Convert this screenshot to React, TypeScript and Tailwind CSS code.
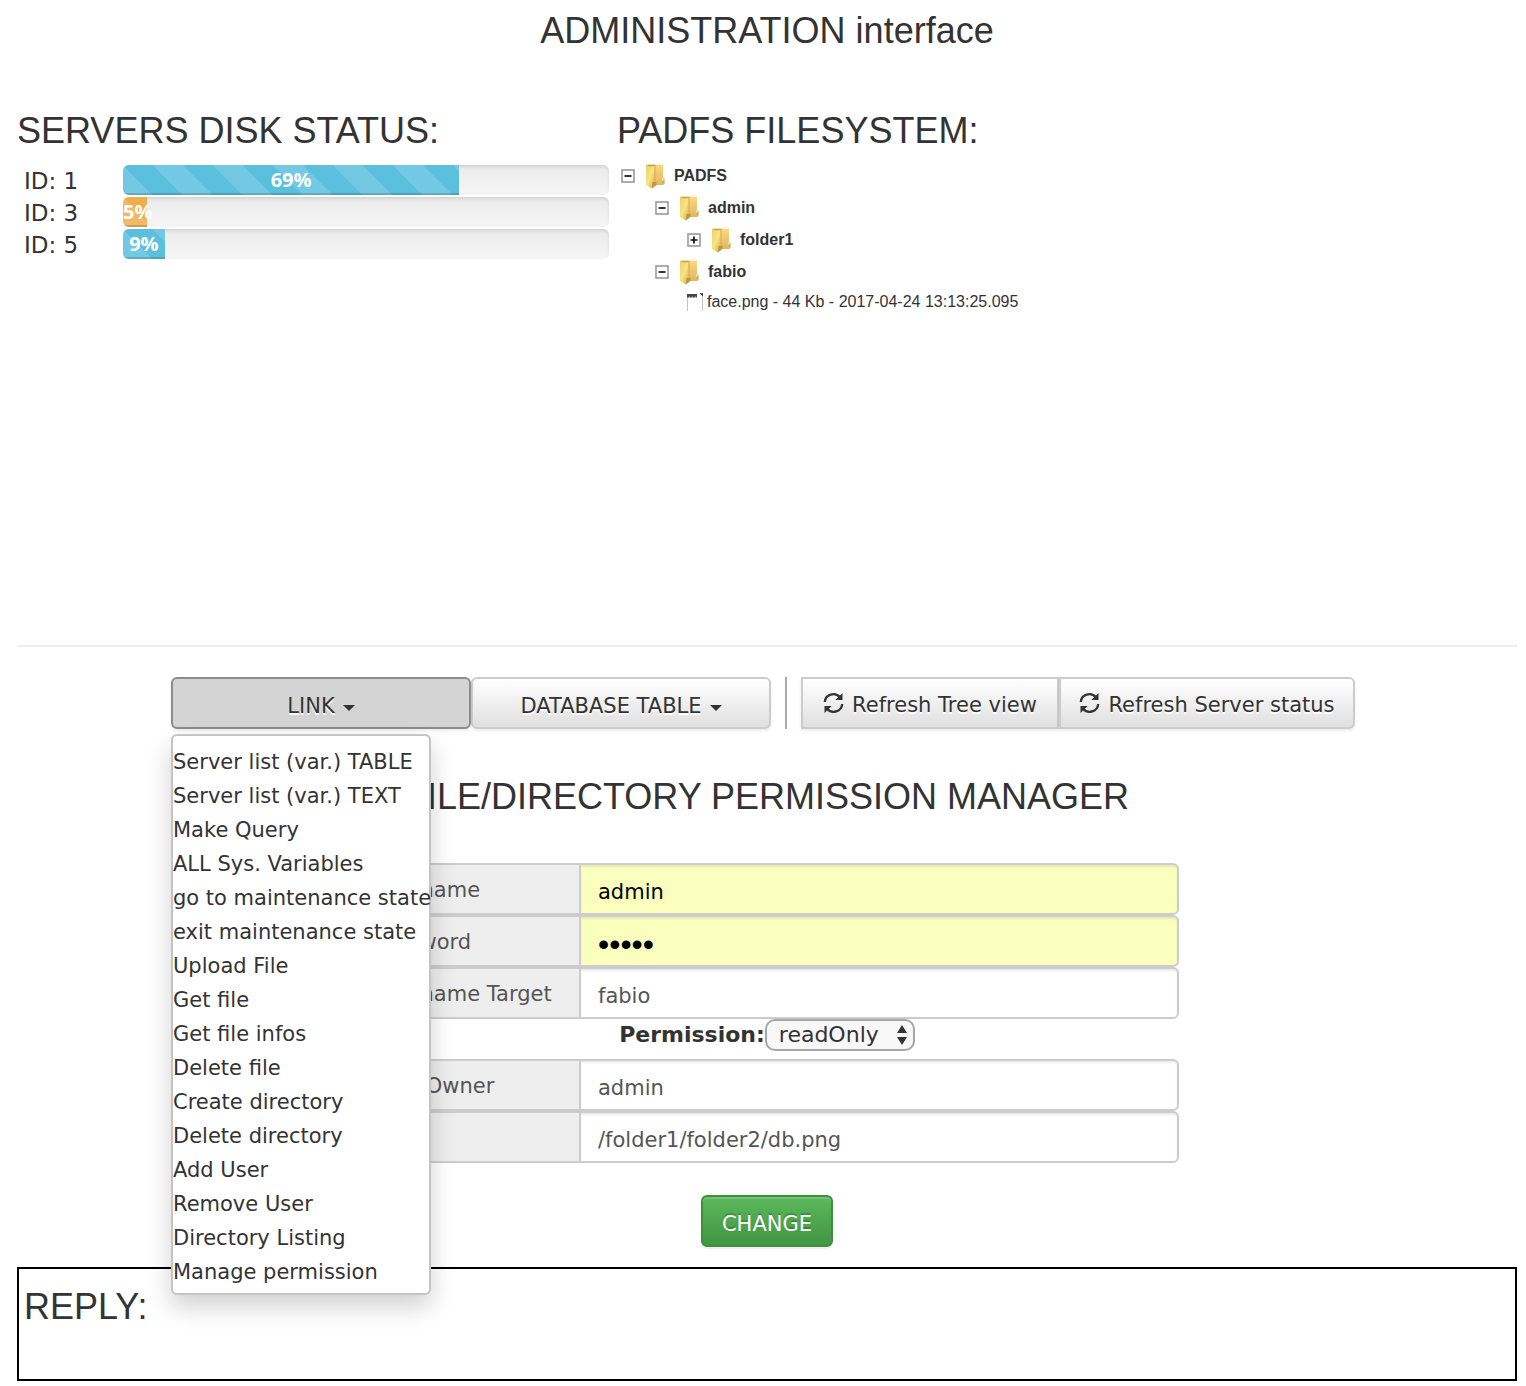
import React from "react";

const servers = [
  { id: 1, used: 69, share: 69.2, color: "bg-[#5bc0de]" },
  { id: 3, used: 5, share: 5, color: "bg-[#f0ad4e]" },
  { id: 5, used: 9, share: 8.6, color: "bg-[#5bc0de]" },
];

const links = [
  "Server list (var.) TABLE",
  "Server list (var.) TEXT",
  "Make Query",
  "ALL Sys. Variables",
  "go to maintenance state",
  "exit maintenance state",
  "Upload File",
  "Get file",
  "Get file infos",
  "Delete file",
  "Create directory",
  "Delete directory",
  "Add User",
  "Remove User",
  "Directory Listing",
  "Manage permission",
];

const heading = "font-['Liberation_Sans',Arial,sans-serif] text-[36px] leading-10 font-normal";
const toolButton =
  "h-[52px] border-2 border-[#ccc] bg-linear-to-b from-white to-[#e0e0e0] shadow-[0_2px_3px_rgba(0,0,0,0.08)] [text-shadow:0_2px_0_#fff] whitespace-nowrap";

function Caret() {
  return (
    <svg className="mt-1 ml-2 inline-block" width="12" height="6" viewBox="0 0 12 6" aria-hidden="true">
      <path d="M0 0h12L6 6z" fill="#333" />
    </svg>
  );
}

function RefreshIcon() {
  return (
    <svg className="mr-2 mb-1 inline-block" width="21" height="22" viewBox="0 0 21 22" fill="none" aria-hidden="true">
      <path d="M1.800 10A8.600 8.300 0 0 1 17 5.200M19.200 12A8.600 8.300 0 0 1 4 16.800" stroke="#333" strokeWidth="2.300" />
      <path d="M19.500 1v7h-7.200zM1.500 21v-7h7.200z" fill="#333" />
    </svg>
  );
}

function Toggle({ open }: { open: boolean }) {
  return (
    <button type="button" aria-label={open ? "Collapse" : "Expand"} className="block h-[14px] w-[14px] shrink-0">
      <svg width="14" height="14" viewBox="0 0 14 14" aria-hidden="true">
        <rect x="1" y="1" width="12" height="12" fill="#fff" stroke="#999" strokeWidth="1.600" />
        <path d={open ? "M3.500 7h7" : "M3.500 7h7M7 3.500v7"} stroke="#111" strokeWidth="1.700" />
      </svg>
    </button>
  );
}

function FolderIcon() {
  return (
    <svg className="shrink-0" width="21" height="25" viewBox="0 0 21 25" aria-hidden="true">
      <defs>
        <linearGradient id="cover" x1="0" y1="0" x2="1" y2="1">
          <stop offset="0" stopColor="#ecd067" />
          <stop offset="0.500" stopColor="#f6e582" />
          <stop offset="1" stopColor="#cfa548" />
        </linearGradient>
        <linearGradient id="back" x1="0" y1="0" x2="0" y2="1">
          <stop offset="0" stopColor="#fbd680" />
          <stop offset="1" stopColor="#e3b75f" />
        </linearGradient>
      </defs>
      <path d="M3 .8h15v12.700l1.800 1.500v4.500l-1.800 1.500H9z" fill="url(#back)" />
      <path d="M1 .8l9 1.700v16.500l-3.200 5.500L1 21z" fill="url(#cover)" />
      <path d="M1 .8h9.500v1.400H4z" fill="#c79c4b" />
      <path d="M10 2.500v17" stroke="#d9ab4c" strokeWidth="1" />
      <path d="M7.500 18h4v3l-4.500 3.500z" fill="#c4963f" />
      <path d="M17.700 14.500v4" stroke="#fff0bd" strokeWidth="1.500" />
      <path d="M18 16.500v2.500" stroke="#93bb86" strokeWidth="1.800" />
    </svg>
  );
}

function FileIcon() {
  return (
    <svg className="shrink-0" width="18" height="18" viewBox="0 0 18 18" aria-hidden="true">
      <path d="M1.500 1v17M16.500 3v15" stroke="#c4c4c4" fill="none" />
      <path d="M1 1h10v3.500H1z" fill="#444" />
      <path d="M3 4h1M6 4h1M9 4h1" stroke="#ddd" />
      <path d="M13.500 0L17 3.500V.5z" fill="#222" />
    </svg>
  );
}

function Folder({ name, open, indent }: { name: string; open: boolean; indent: string }) {
  return (
    <div className={`flex h-8 items-center ${indent}`}>
      <Toggle open={open} />
      <span className="mr-2 ml-[10px] block"><FolderIcon /></span>
      <span className="font-bold">{name}</span>
    </div>
  );
}

function Field({ id, label, value, type = "text", filled = false }: {
  id: string; label: string; value: string; type?: string; filled?: boolean;
}) {
  return (
    <div className="flex h-[52px]">
      <label
        htmlFor={id}
        className="flex w-[224px] shrink-0 items-center rounded-l-md border-2 border-r-0 border-[#ccc] bg-[#eee] pt-0.5 pl-4 text-[#555]"
      >
        {label}
      </label>
      <input
        id={id}
        type={type}
        defaultValue={value}
        autoComplete="off"
        className={`min-w-0 flex-1 rounded-r-md border-2 border-[#ccc] px-[17px] pt-1.5 shadow-[inset_0_2px_2px_rgba(0,0,0,0.075)] outline-none ${
          type === "password" ? "font-['Liberation_Sans',Arial,sans-serif] text-[32px]" : ""
        } ${filled ? "bg-[#faffbd] text-black" : "bg-white text-[#555]"}`}
      />
    </div>
  );
}

export default function App() {
  return (
    <main className="bg-white pr-[9px] pb-[5px] pl-[17px] font-['DejaVu_Sans',Verdana,sans-serif] text-[21px] leading-[30px] text-[#333]">
      <h1 className={`${heading} pt-[11px] text-center`}>ADMINISTRATION interface</h1>

      <div className="mt-[60px] grid min-h-[536px] grid-cols-[2fr_3fr] border-b-2 border-[#eee]">
        <section>
          <h2 className={heading}>SERVERS DISK STATUS:</h2>
          <table className="mt-[13px] w-full border-separate border-spacing-0">
            <tbody>
              {servers.map((s) => (
                <tr key={s.id} className="h-8">
                  <th scope="row" className="w-[106px] p-0 pt-0.5 pl-[7px] text-left text-[23px] font-normal">ID: {s.id}</th>
                  <td className="py-px pr-2 pl-0">
                    <div
                      role="progressbar"
                      aria-valuenow={s.used}
                      aria-label={`Server ${s.id} disk usage`}
                      className="h-[30px] overflow-hidden rounded-md bg-linear-to-b from-[#ebebeb] to-[#f5f5f5] shadow-[inset_0_2px_3px_rgba(0,0,0,0.1)]"
                    >
                      <div
                        className={`flex h-full items-center [justify-content:safe_center] bg-[linear-gradient(45deg,rgba(255,255,255,0.15)_25%,transparent_25%,transparent_50%,rgba(255,255,255,0.15)_50%,rgba(255,255,255,0.15)_75%,transparent_75%,transparent)] bg-[size:60px_60px] bg-[position:30px_0] font-['Open_Sans',sans-serif] text-xl font-bold text-white shadow-[inset_0_-2px_0_rgba(0,0,0,0.15)] ${s.color}`}
                        style={{ width: `${s.share}%` }}
                      >
                        {s.used}%
                      </div>
                    </div>
                  </td>
                </tr>
              ))}
            </tbody>
          </table>
        </section>

        <section>
          <h2 className={heading}>PADFS FILESYSTEM:</h2>
          <div className="mt-[9px] font-['Liberation_Sans',Arial,sans-serif] text-base leading-5">
            <Folder name="PADFS" open indent="pl-1" />
            <Folder name="admin" open indent="pl-[38px]" />
            <Folder name="folder1" open={false} indent="pl-[70px]" />
            <Folder name="fabio" open indent="pl-[38px]" />
            <div className="flex h-7 items-center pl-[69px]">
              <FileIcon />
              <span className="ml-[3px]">face.png - 44 Kb - 2017-04-24 13:13:25.095</span>
            </div>
          </div>
        </section>
      </div>

      <nav className="mt-[30px] flex justify-center pr-2">
        <div className="relative">
          <button type="button" aria-expanded="true" className="flex h-[52px] w-[300px] items-center justify-center rounded-md border-2 border-[#8c8c8c] bg-[#d4d4d4] pt-1.5 shadow-[0_2px_3px_rgba(0,0,0,0.08)] [text-shadow:0_2px_0_#fff]">
            LINK<Caret />
          </button>
          <ul className="absolute top-[57px] left-0 z-10 w-[260px] rounded-md border-2 border-[#c4c4c4] bg-white pt-[9px] pb-[4px] shadow-[0_12px_24px_rgba(0,0,0,0.18)]">
            {links.map((l) => (
              <li key={l} className="h-[34px] leading-[34px] whitespace-nowrap">
                <a href="#reply">{l}</a>
              </li>
            ))}
          </ul>
        </div>
        <button type="button" className={`${toolButton} flex w-[300px] items-center justify-center rounded-md pt-1.5`}>
          DATABASE TABLE<Caret />
        </button>
        <div className="mx-[14px] w-[2px] bg-[#aaa]" />
        <button type="button" className={`${toolButton} flex w-[258px] items-center justify-center pt-1`}>
          <RefreshIcon />Refresh Tree view
        </button>
        <button type="button" className={`${toolButton} flex w-[296px] items-center justify-center rounded-r-md pt-1`}>
          <RefreshIcon />Refresh Server status
        </button>
      </nav>

      <form className="mx-auto mt-12 max-w-[824px]" onSubmit={(e) => e.preventDefault()}>
        <h2 className={`${heading} mb-[46px] text-center whitespace-nowrap`}>FILE/DIRECTORY PERMISSION MANAGER</h2>
        <Field id="username" label="Username" value="admin" filled />
        <Field id="password" label="Password" value="admin" type="password" filled />
        <Field id="target" label="Username Target" value="fabio" />
        <div className="flex h-10 items-start justify-center text-[22px]">
          <label htmlFor="permission" className="pt-px font-bold">Permission:</label>
          <span className="relative">
            <select id="permission" className="block h-8 w-[150px] appearance-none rounded-[10px] border-2 border-[#a6a6a6] bg-[#f8f8f8] pl-3 leading-7">
              <option>readOnly</option>
              <option>readWrite</option>
            </select>
            <svg className="pointer-events-none absolute top-[6px] right-2" width="10" height="20" viewBox="0 0 10 20" aria-hidden="true">
              <path d="M5 0l5 8H0zM5 20l5-8H0z" fill="#333" />
            </svg>
          </span>
        </div>
        <Field id="owner" label="Path Owner" value="admin" />
        <Field id="path" label="Path" value="/folder1/folder2/db.png" />
        <div className="mt-8 text-center">
          <button type="submit" className="h-[52px] w-[132px] rounded-md border-2 border-[#3e8f3e] bg-linear-to-b from-[#5cb85c] to-[#419641] pt-1.5 text-white shadow-[inset_0_2px_0_rgba(255,255,255,0.15),0_2px_2px_rgba(0,0,0,0.075)] [text-shadow:0_-2px_0_rgba(0,0,0,0.2)]">
            CHANGE
          </button>
        </div>
      </form>

      <section id="reply" className="mt-5 min-h-[114px] border-2 border-black px-[5px] pt-[18px]">
        <h2 className={heading}>REPLY:</h2>
      </section>
    </main>
  );
}
